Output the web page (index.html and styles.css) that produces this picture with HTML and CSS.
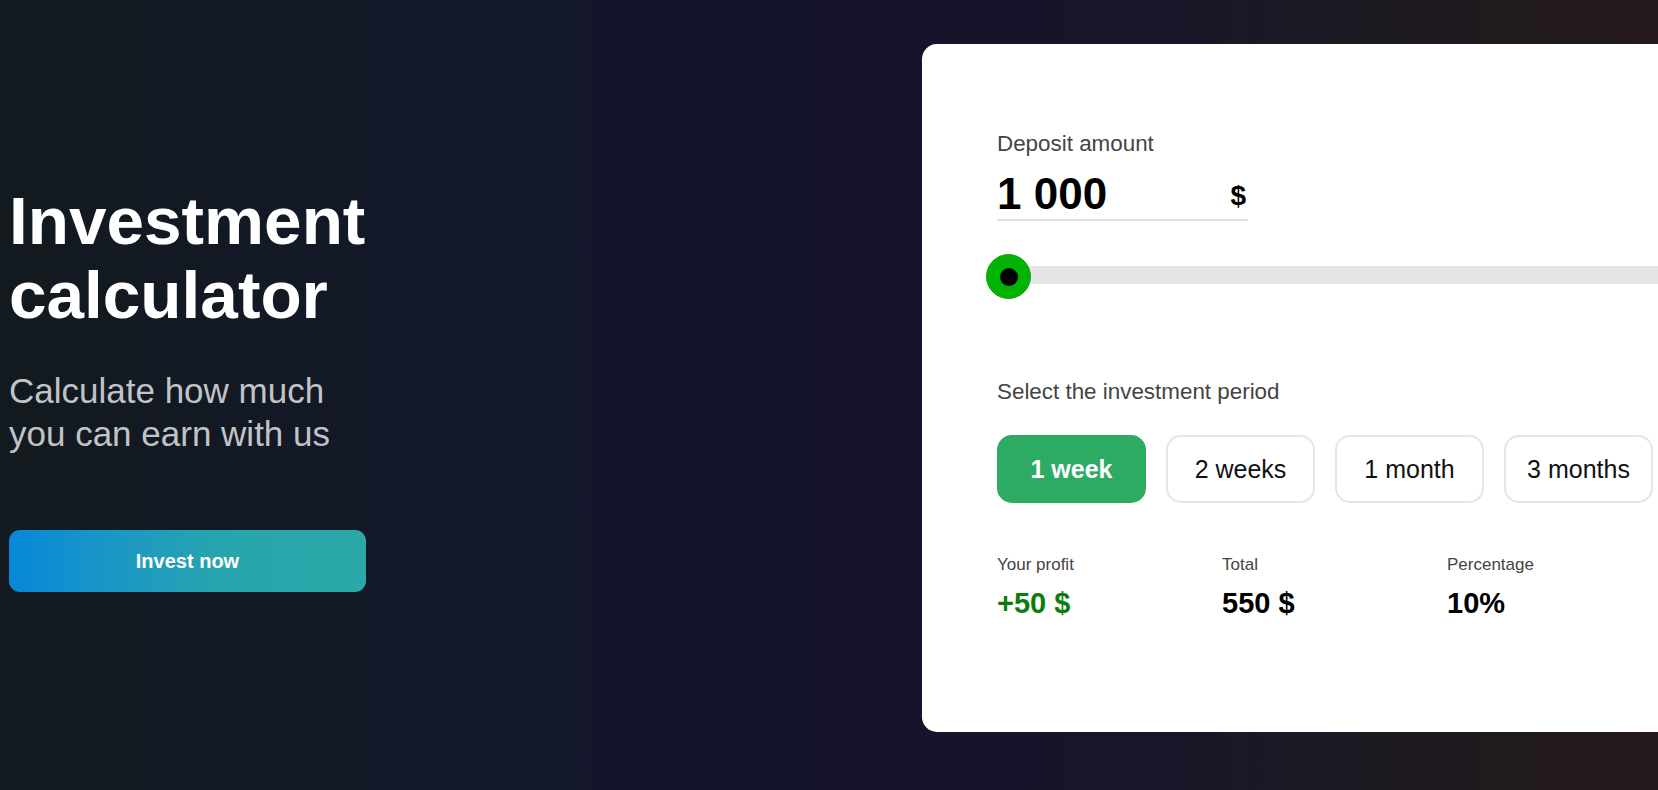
FILE: index.html
```html
<!DOCTYPE html>
<html lang="en">
<head>
<meta charset="utf-8">
<title>Investment calculator</title>
<link rel="stylesheet" href="styles.css">
</head>
<body>
<main class="page">
  <section class="intro">
    <h1 class="intro-title">Investment calculator</h1>
    <p class="intro-sub">Calculate how much you can earn with us</p>
    <button class="invest-btn" type="button">Invest now</button>
  </section>

  <section class="calc">
    <div class="field-label">Deposit amount</div>
    <div class="amount">
      <span class="amount-value">1 000</span>
      <span class="amount-currency">$</span>
    </div>

    <div class="slider">
      <div class="slider-thumb"><span class="slider-dot"></span></div>
    </div>

    <div class="field-label period-label">Select the investment period</div>
    <div class="periods">
      <button class="period period-active" type="button">1 week</button>
      <button class="period" type="button">2 weeks</button>
      <button class="period" type="button">1 month</button>
      <button class="period" type="button">3 months</button>
    </div>

    <div class="results">
      <div class="result">
        <div class="result-label">Your profit</div>
        <div class="result-value result-profit">+50 $</div>
      </div>
      <div class="result">
        <div class="result-label">Total</div>
        <div class="result-value">550 $</div>
      </div>
      <div class="result">
        <div class="result-label">Percentage</div>
        <div class="result-value">10%</div>
      </div>
    </div>
  </section>
</main>
</body>
</html>
```

FILE: styles.css
```css
* {
  box-sizing: border-box;
}

html, body {
  margin: 0;
  padding: 0;
  height: 100%;
}

body {
  width: 1658px;
  height: 790px;
  overflow: hidden;
  font-family: "Liberation Sans", Arial, sans-serif;
  background: linear-gradient(90deg, #121a1f 0%, #13182a 30%, #14132b 50%, #18152a 68%, #1e1a20 85%, #251a1d 100%);
}

.page {
  display: flex;
  align-items: center;
  gap: 556px;
  padding: 44px 0 0 9px;
}

/* ---------- left intro ---------- */
.intro {
  width: 357px;
  flex: 0 0 357px;
  display: flex;
  flex-direction: column;
}

.intro-title {
  margin: 0;
  font-size: 67.5px;
  line-height: 74px;
  font-weight: 700;
  color: #ffffff;
}

.intro-sub {
  margin: 37px 0 0;
  font-size: 35px;
  line-height: 43px;
  color: #c2c3c7;
}

.invest-btn {
  margin-top: 75px;
  width: 357px;
  height: 62px;
  border: 0;
  border-radius: 11px;
  font-family: inherit;
  font-size: 20px;
  font-weight: 700;
  color: #ffffff;
  background: linear-gradient(90deg, #0787da 0%, #1b98c4 30%, #27a5ad 60%, #2ba8a7 100%);
}

/* ---------- calculator card ---------- */
.calc {
  flex: 0 0 780px;
  width: 780px;
  height: 688px;
  background: #ffffff;
  border-radius: 15px;
  padding: 87px 0 0 75px;
}

.field-label {
  font-size: 22.4px;
  line-height: 26px;
  color: #444444;
}

.amount {
  margin-top: 12px;
  width: 251px;
  height: 52px;
  display: flex;
  align-items: flex-end;
  justify-content: space-between;
  border-bottom: 2px solid #e3e3e3;
}

.amount-value {
  font-size: 44px;
  line-height: 50px;
  font-weight: 700;
  color: #000000;
}

.amount-currency {
  font-size: 28px;
  line-height: 32px;
  font-weight: 700;
  color: #000000;
  padding: 0 2px 7px 0;
}

.slider {
  position: relative;
  margin-top: 45px;
  height: 18px;
  background: #e4e4e4;
}

.slider-thumb {
  position: absolute;
  left: -11px;
  top: -12px;
  width: 45px;
  height: 45px;
  border-radius: 50%;
  background: #00b300;
  border: 1px solid #189f18;
  display: flex;
  align-items: center;
  justify-content: center;
}

.slider-dot {
  width: 18px;
  height: 18px;
  border-radius: 50%;
  background: #000000;
}

.period-label {
  margin-top: 95px;
}

.periods {
  margin-top: 30px;
  display: flex;
  gap: 20px;
}

.period {
  flex: 0 0 149px;
  width: 149px;
  height: 68px;
  border: 2px solid #e5e5e5;
  border-radius: 15px;
  background: #ffffff;
  font-family: inherit;
  font-size: 25px;
  color: #111111;
  padding: 0;
}

.period-active {
  border-color: #2eab63;
  background: #2eab63;
  color: #ffffff;
  font-weight: 700;
}

.results {
  margin-top: 52px;
  display: flex;
}

.result {
  flex: 0 0 225px;
  width: 225px;
}

.result-label {
  font-size: 17px;
  line-height: 20px;
  color: #444444;
}

.result-value {
  margin-top: 12px;
  font-size: 29px;
  line-height: 32px;
  font-weight: 700;
  color: #000000;
}

.result-profit {
  color: #0b7d0b;
}
```
